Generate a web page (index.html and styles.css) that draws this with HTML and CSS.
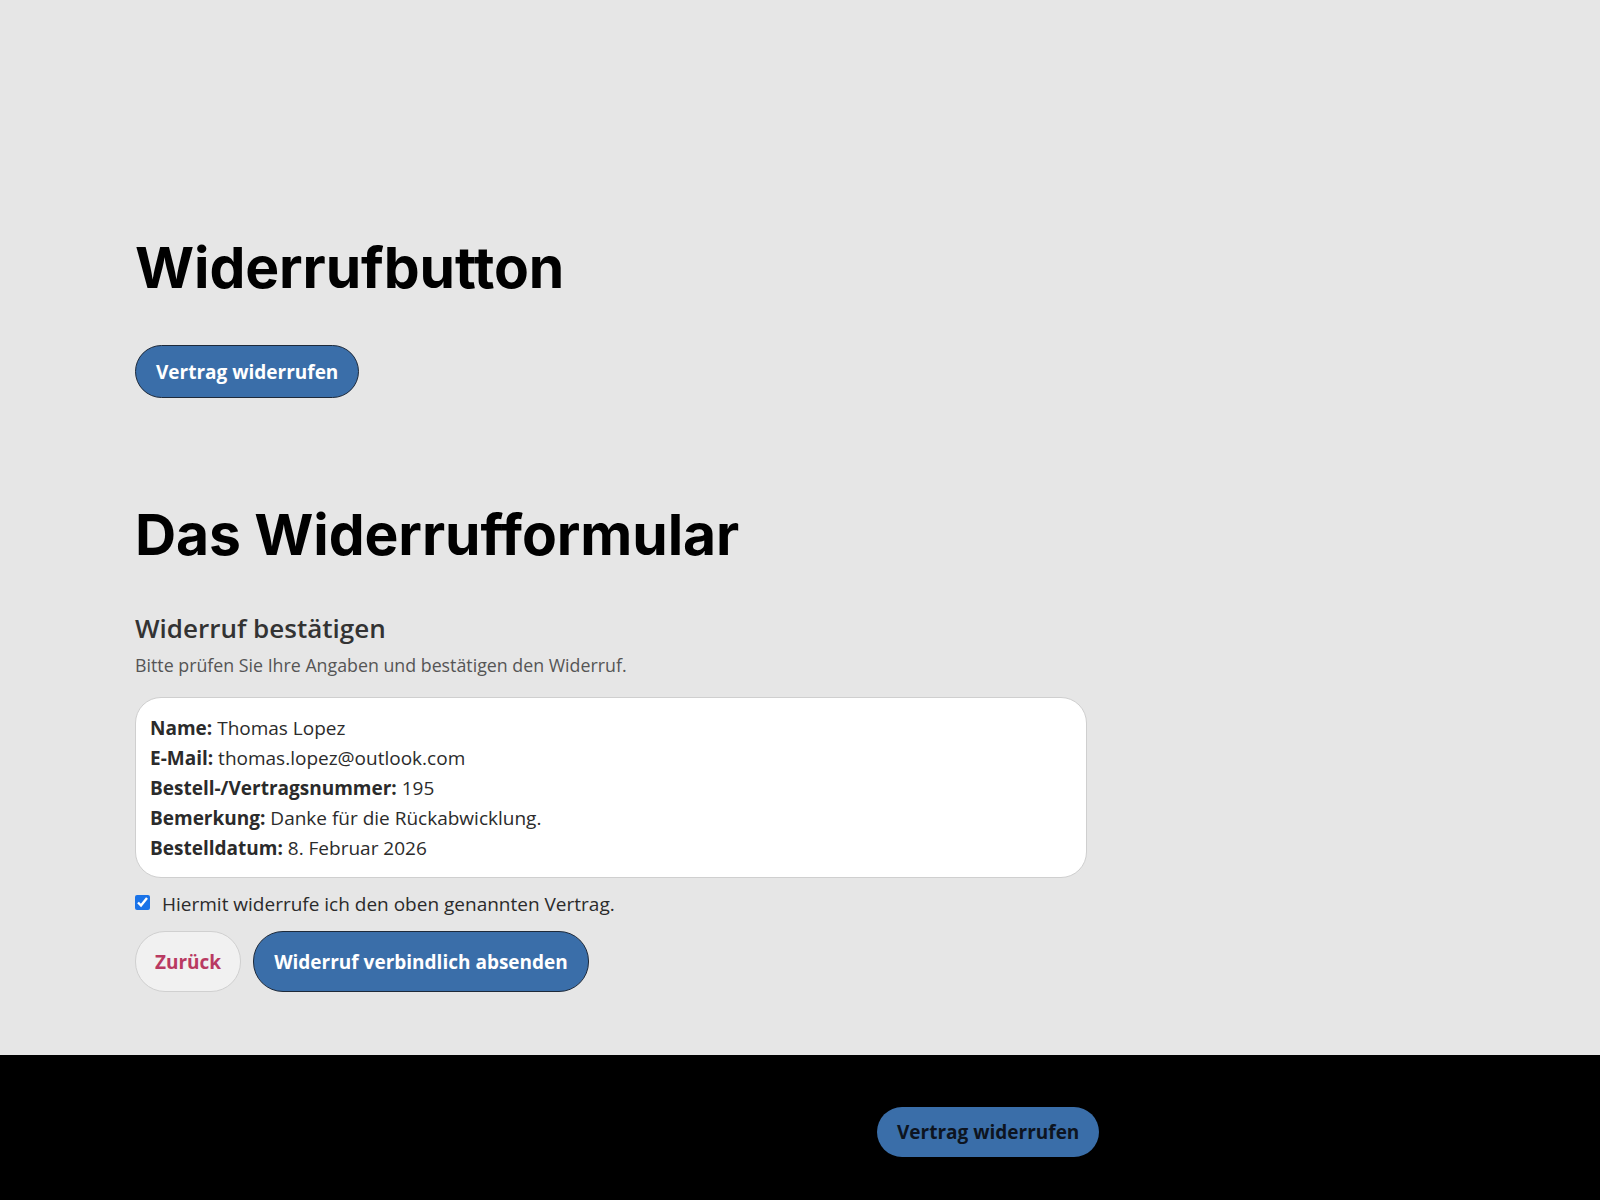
FILE: index.html
```html
<!DOCTYPE html>
<html lang="de">
<head>
    <meta charset="UTF-8">
    <meta name="viewport" content="width=device-width, initial-scale=1.0">
    <title>Widerrufbutton</title>
    <link rel="stylesheet" href="styles.css">
</head>
<body>
    <main class="page">
        <section class="block">
            <h1 class="big-title">Widerrufbutton</h1>
            <button type="button" class="btn btn-primary btn-open">Vertrag widerrufen</button>
        </section>

        <section class="block form-block">
            <h1 class="big-title">Das Widerrufformular</h1>
            <h3 class="step-title">Widerruf bestätigen</h3>
            <p class="step-hint">Bitte prüfen Sie Ihre Angaben und bestätigen den Widerruf.</p>

            <div class="summary">
                <p><strong>Name:</strong> Thomas Lopez</p>
                <p><strong>E-Mail:</strong> thomas.lopez@outlook.com</p>
                <p><strong>Bestell-/Vertragsnummer:</strong> 195</p>
                <p><strong>Bemerkung:</strong> Danke für die Rückabwicklung.</p>
                <p><strong>Bestelldatum:</strong> 8. Februar 2026</p>
            </div>

            <label class="confirm">
                <input type="checkbox" checked>
                <span>Hiermit widerrufe ich den oben genannten Vertrag.</span>
            </label>

            <div class="actions">
                <button type="button" class="btn btn-back">Zurück</button>
                <button type="submit" class="btn btn-primary btn-send">Widerruf verbindlich absenden</button>
            </div>
        </section>
    </main>

    <footer class="site-footer">
        <button type="button" class="btn btn-footer">Vertrag widerrufen</button>
    </footer>
</body>
</html>
```

FILE: styles.css
```css
body {
    margin: 0;
    background-color: #e6e6e6;
    font-family: "Open Sans", "Noto Sans", sans-serif;
    color: #2b2b2b;
}
.page {
    width: 952px;
    padding: 234px 0 63px 135px;
}
.big-title {
    font-family: Inter, sans-serif;
    font-weight: 700;
    font-size: 57px;
    letter-spacing: -0.1px;
    line-height: 67px;
    color: #000;
    margin: 0 0 44px 0;
}
.form-block {
    margin-top: 103px;
}
.form-block .big-title {
    margin-bottom: 42px;
}
.btn {
    font-family: "Open Sans", "Noto Sans", sans-serif;
    font-weight: 700;
    font-size: 19px;
    border-radius: 30px;
    cursor: pointer;
}
.btn-primary {
    background-color: #3a6ea9;
    color: #fff;
    border: 1px solid #1e2a3a;
}
.btn-open {
    height: 53px;
    padding: 0 20px;
}
.step-title {
    font-size: 26px;
    font-weight: 600;
    color: #333;
    margin: 0 0 7px 0;
}
.step-hint {
    font-size: 17.8px;
    color: #555;
    margin: 0 0 20px 0;
}
.summary {
    background-color: #fff;
    border: 1px solid #cfcfcf;
    border-radius: 26px;
    padding: 15px 15px 14px 14px;
}
.summary p {
    margin: 0;
    font-size: 19px;
    line-height: 30px;
}
.confirm {
    display: flex;
    align-items: center;
    gap: 12px;
    margin: 13px 0 14px 0;
    font-size: 19px;
}
.confirm input {
    margin: 0 0 4px 0;
    width: 15px;
    height: 15px;
    accent-color: #1a73e8;
}
.actions {
    display: flex;
    gap: 12px;
}
.btn-back {
    height: 61px;
    padding: 0 19px;
    background-color: #f1f1f1;
    border: 1px solid #d0d0d0;
    color: #b93a62;
}
.btn-send {
    height: 61px;
    padding: 0 20px;
}
.site-footer {
    background-color: #000;
    height: 145px;
    display: flex;
    padding-left: 877px;
    padding-top: 52px;
    box-sizing: border-box;
}
.btn-footer {
    height: 50px;
    padding: 0 20px;
    background-color: #3a6ea9;
    color: #0d1420;
    border: none;
}
```
